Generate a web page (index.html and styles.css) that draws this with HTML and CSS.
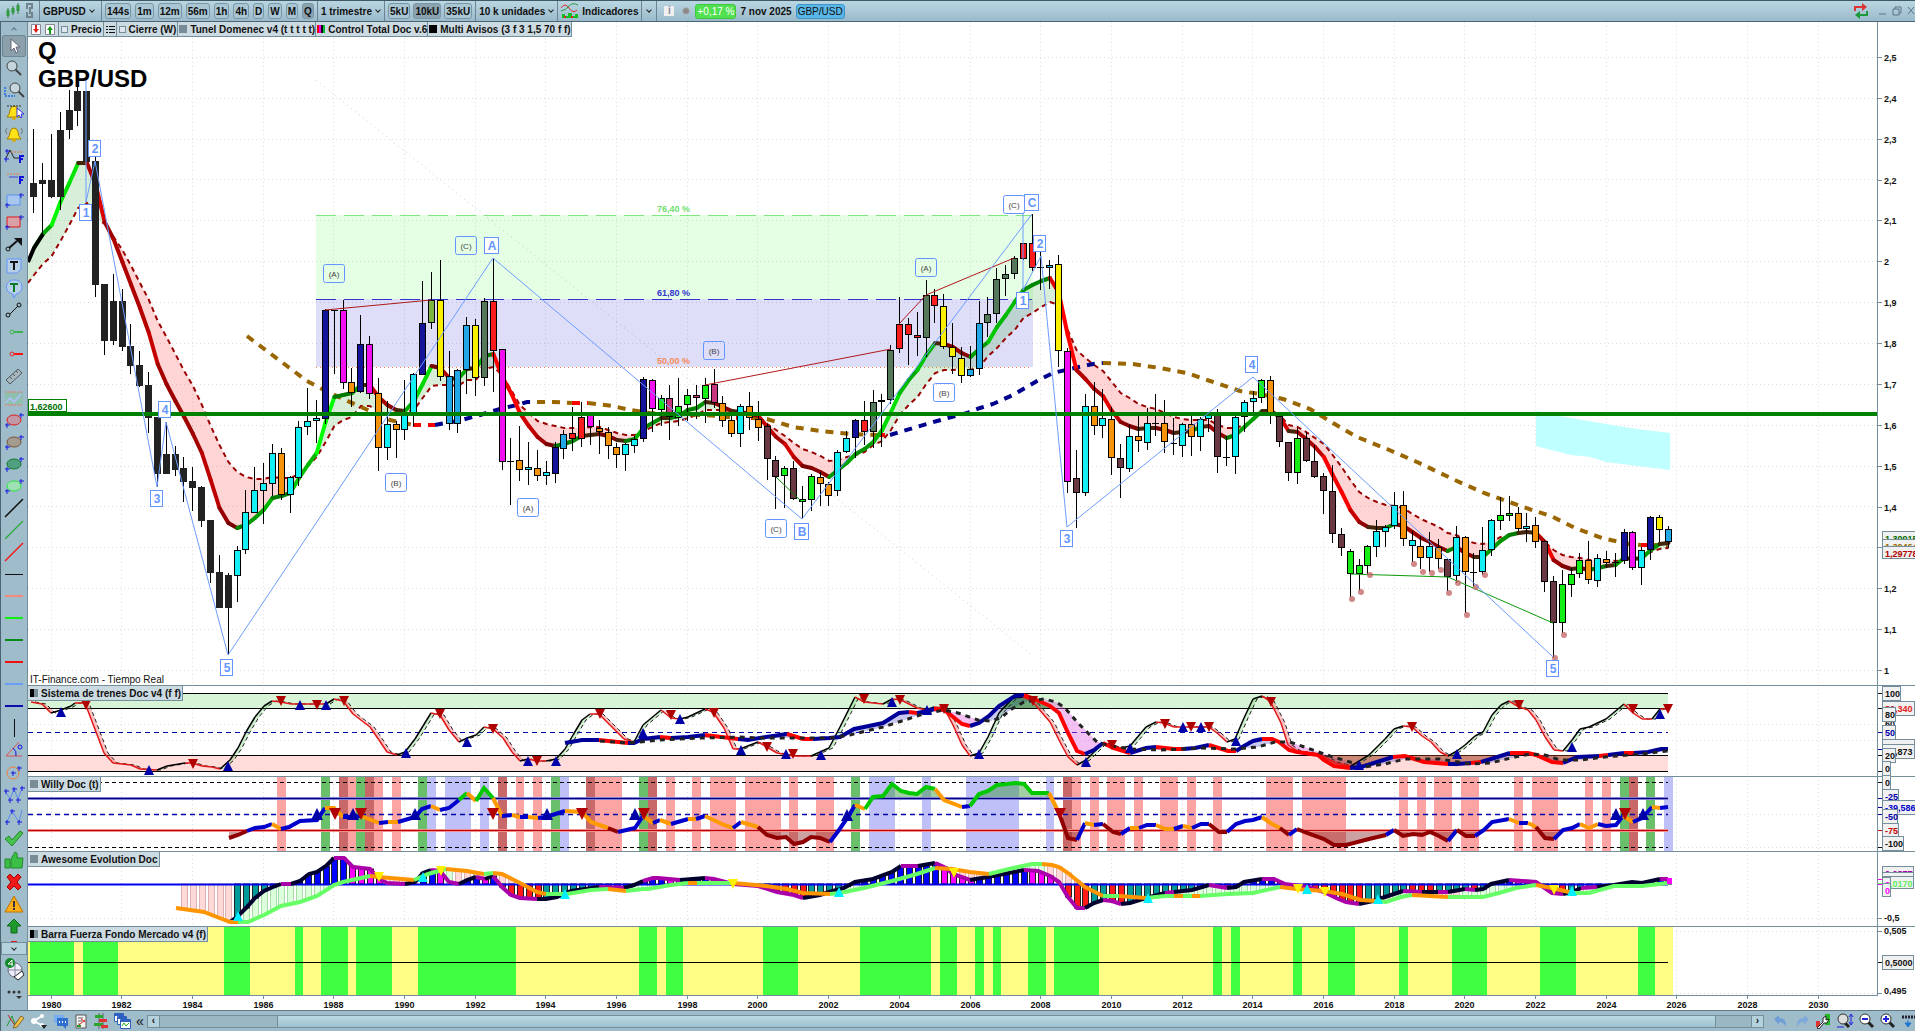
FILE: index.html
```html
<!DOCTYPE html>
<html lang="es">
<head>
  <meta charset="UTF-8" />
  <meta name="viewport" content="width=device-width, initial-scale=1.0" />
  <title>GBP/USD</title>
  <link rel="stylesheet" href="styles.css">
</head>
<body>
  <header class="toolbar">
    <div class="group">
      <svg class="icon" width="18" height="18" viewBox="0 0 18 18"><path d="M4 6v10M9 4v9M14 1v11" stroke="#2c7a3a"/><path d="M4 8v6M9 6v5M14 3v6" stroke="#2f9a40" stroke-width="3"/></svg>
      <svg class="icon" width="8" height="16" viewBox="0 0 8 16" fill="none" stroke="#70828c" stroke-width="2"><path d="M1 6V1h5v5M1 9v5h5V9M4 4v7"/></svg>
    </div>
    <button class="group pick symbol">GBPUSD <i class="chev"></i></button>
    <div class="group frames">
      <button>144s</button><button>1m</button><button>12m</button><button>56m</button><button>1h</button><button>4h</button><button>D</button><button>W</button><button>M</button><button class="on">Q</button>
    </div>
    <button class="group pick">1 trimestre <i class="chev"></i></button>
    <div class="group frames units">
      <button>5kU</button><button class="on">10kU</button><button>35kU</button>
    </div>
    <button class="group pick">10 k unidades <i class="chev"></i></button>
    <button class="group pick indi">
      <svg width="18" height="16" viewBox="0 0 18 16" fill="none"><path d="M0 5q4-6 8 0t8 2" stroke="#d33"/><path d="M0 8q5-1 8-5t9-1" stroke="#2a9a3a"/><path d="M1 15v-4h3v2h3v-3h4v3h3v-2h3v4z" fill="#10c020"/><path d="M4 15v-2M11 15v-2" stroke="#d22" stroke-width="2"/></svg>
      Indicadores
    </button>
    <button class="group pick more" aria-label="Más indicadores"><i class="chev"></i></button>
    <div class="info"><span class="box-i">i</span><span class="dot"></span><span class="change">+0,17 %</span><b>7 nov 2025</b><span class="pair">GBP/USD</span></div>
    <div class="window">
      <svg width="18" height="18" viewBox="0 0 18 18" fill="none" stroke-width="2"><path d="M3 9V5h9" stroke="#d33"/><path d="M10 1l5 4-5 4z" fill="#d33"/><path d="M15 9v4H6" stroke="#1a9a3a"/><path d="M8 9l-5 4 5 4z" fill="#1a9a3a"/></svg>
      <svg width="40" height="14" viewBox="0 0 40 14" fill="none" stroke="#5d7482"><path d="M4 10h7M18 5h6v6h-6zM20 5V3h6v6h-2M33 3l6 7M39 3l-6 7"/></svg>
    </div>
  </header>

  <div class="work">
    <nav class="side">
      <button class="scroll" aria-label="Arriba"><i class="chev up"></i></button>
      <div id="tools" class="tools"></div>
      <button class="scroll down" aria-label="Abajo"><i class="chev"></i></button>
      <button class="tool big" aria-label="Objetos"><svg width="24" height="28" viewBox="0 0 24 28"><circle cx="13" cy="15" r="7" fill="#eef" stroke="#667"/><path d="M13 8v14M6 15h14" stroke="#889"/><path d="M12 22l8-6 2 4-6 5z" fill="#fff" stroke="#222"/><circle cx="8" cy="8" r="5" fill="#138a2a"/><path d="M10 11V5L6 9h5" stroke="#fff" fill="none"/></svg></button>
      <button class="tool" aria-label="Más"><svg width="24" height="22" viewBox="0 0 24 22"><g fill="#333"><circle cx="7" cy="9" r="1.500"/><circle cx="12" cy="9" r="1.500"/><circle cx="17" cy="9" r="1.500"/><path d="M14 13h6l-3 3z"/></g></svg></button>
    </nav>

    <main class="chart">
      <section class="panel price">
        <svg id="price"></svg>
        <div class="tabs">
          <button class="mini"><svg width="24" height="11" viewBox="0 0 24 11"><path d="M.5.500h9v10h-9zM14.500.500h9v10h-9z" fill="#fff" stroke="#889"/><path d="M4 1h2v4h2L5 9 2 5h2z" fill="#d22"/><path d="M18 10h2V6h2l-3-4-3 4h2z" fill="#1a9a1a"/></svg></button>
          <label><input type="checkbox">Precio</label>
          <button class="mini" aria-label="Lista"><svg width="9" height="9" viewBox="0 0 9 9" stroke="#111"><path d="M0 1.500h2M3 1.500h6M0 4.500h2M3 4.500h6M0 7.500h2M3 7.500h6"/></svg></button>
          <label><input type="checkbox">Cierre (W)</label>
          <span><i class="sq"></i>Tunel Domenec v4 (t t t t t)</span>
          <span><i class="sq multi"></i>Control Total Doc v.6</span>
          <span><i class="sq black"></i>Multi Avisos (3 f 3 1,5 70 f f)</span>
        </div>
        <h1>Q<br>GBP/USD</h1>
        <p class="source">IT-Finance.com - Tiempo Real</p>
      </section>
      <section class="panel trenes"><svg id="trenes"></svg><span class="tab"><i class="sq duo"></i>Sistema de trenes Doc v4 (f f)</span></section>
      <section class="panel willy"><svg id="willy"></svg><span class="tab"><i class="sq"></i>Willy Doc (t)</span></section>
      <section class="panel awesome"><svg id="awesome"></svg><span class="tab"><i class="sq"></i>Awesome Evolution Doc</span></section>
      <section class="panel barra"><svg id="barra"></svg><span class="tab"><i class="sq duo"></i>Barra Fuerza Fondo Mercado v4 (f)</span></section>
      <svg id="years" class="years"></svg>
    </main>
  </div>

  <footer class="bottom">
    <button aria-label="Dibujar"><svg width="20" height="16" viewBox="0 0 20 16" fill="none"><path d="M2 13L7 3l3 8 4-5" stroke="#293"/><path d="M3 2l8 12" stroke="#c22"/><path d="M9 13l7-10 3 2-7 9-4 1z" fill="#f5c542" stroke="#863"/></svg></button>
    <button aria-label="Compartir"><svg width="18" height="16" viewBox="0 0 18 16"><path d="M12 3L4 8l9 5" stroke="#fff" stroke-width="2" fill="none"/><circle cx="12" cy="3" r="2" fill="#fff"/><circle cx="4" cy="8" r="3" fill="#fff"/><circle cx="12" cy="12" r="2" fill="#fff"/><path d="M11 12h6l-3 4z" fill="#222"/></svg></button>
    <button aria-label="Chat"><svg width="16" height="16" viewBox="0 0 16 16"><path d="M1 2h10v8H1z" fill="#78aef0"/><path d="M4 5h11v8h-2v3l-3-3H4z" fill="#2f6fd0"/><path d="M6 9h7" stroke="#fff" stroke-width="2" stroke-dasharray="1 2"/></svg></button>
    <button aria-label="Informe"><svg width="14" height="16" viewBox="0 0 14 16"><path d="M2 2h10v13H2z" fill="#f4f4f4" stroke="#555"/><path d="M4 5h5M4 8h4M4 11h2" stroke="#666"/><path d="M7 6l4 3M5 12l6-5" stroke="#d22"/><path d="M3 12h4v2H3z" fill="#292"/></svg></button>
    <button aria-label="Cartera"><svg width="16" height="16" viewBox="0 0 16 16"><path d="M6 0v16M10 0v16" stroke="#666"/><path d="M2 2h8v3H2zM1 10h9v3H1z" fill="#2ba52b"/><path d="M6 6h8v3H6zM8 12h7v3H8z" fill="#d33"/></svg></button>
    <button aria-label="Ventanas"><svg width="17" height="16" viewBox="0 0 17 16" fill="#fff" stroke="#2f62c0"><path d="M.5.500h9v8h-9z"/><path d="M1 2h8" stroke-width="2"/><path d="M3.500 3.500h9v8h-9z"/><path d="M4 5h8" stroke-width="2"/><path d="M6.500 6.500h10v9h-10z"/><path d="M7 8h9" stroke-width="2"/><path d="M8 13l2-3 2 3 3-3" stroke="#2a2" fill="none"/></svg></button>
    <button class="fold">«</button>
    <div class="bar">
      <button aria-label="Anterior">‹</button>
      <div class="track"><div class="thumb"></div></div>
      <button aria-label="Siguiente">›</button>
    </div>
    <button aria-label="Deshacer"><svg width="16" height="16" viewBox="0 0 16 16"><path d="M1 6l5-4v3q8 0 7 9-2-5-7-5v3z" fill="#6f9fd6"/></svg></button>
    <button aria-label="Rehacer"><svg width="16" height="16" viewBox="0 0 16 16"><path d="M15 6l-5-4v3Q2 5 3 14q2-5 7-5v3z" fill="#7fa9da"/></svg></button>
    <button aria-label="Ajustes"><svg width="16" height="16" viewBox="0 0 16 16"><path d="M1 8h4v6H1z" fill="#d33"/><path d="M10 1h5v11h-5z" fill="#2b2"/><path d="M2 15l6-6V5l3-2v4l3-1-2 4H9l-5 6z" fill="#fff" stroke="#222"/></svg></button>
    <button aria-label="Ajustar zoom"><svg width="18" height="16" viewBox="0 0 18 16"><path d="M8 9l5 5" stroke="#222" stroke-width="3"/><circle cx="7" cy="6" r="5" fill="#ddd" stroke="#333"/><path d="M15 2v9M13 4l2-3 2 3M13 9l2 3 2-3M1 14h7" stroke="#22d" fill="none"/></svg></button>
    <button aria-label="Alejar"><svg width="16" height="16" viewBox="0 0 16 16"><path d="M9 9l5 5" stroke="#222" stroke-width="3"/><circle cx="6" cy="6" r="5" fill="#fff" stroke="#333"/><path d="M3 6h6" stroke="#22d" stroke-width="2"/></svg></button>
    <button aria-label="Acercar"><svg width="16" height="16" viewBox="0 0 16 16"><path d="M9 9l5 5" stroke="#222" stroke-width="3"/><circle cx="6" cy="6" r="5" fill="#fff" stroke="#333"/><path d="M3 6h6M6 3v6" stroke="#22d" stroke-width="2"/></svg></button>
    <button aria-label="Panel"><svg width="14" height="16" viewBox="0 0 14 16"><path d="M1 4h13" stroke="#223" stroke-width="3" stroke-dasharray="2 1"/><path d="M7 7v4M4 10l3 4 3-4z" stroke="#27c" fill="#27c"/></svg></button>
  </footer>
  <script src="chart.js"></script>
</body>
</html>
```

FILE: styles.css
```css
* {
  box-sizing: border-box;
}
body {
  margin: 0;
  height: 100vh;
  display: flex;
  flex-direction: column;
  overflow: hidden;
  font-family: "Liberation Sans", Arial, sans-serif;
  font-size: 10px;
  font-weight: bold;
  color: #111;
  background-color: #9fbcca;
}
button {
  font: inherit;
  color: inherit;
  background: none;
  border: 0;
  padding: 0;
  margin: 0;
  cursor: pointer;
}
.toolbar {
  height: 22px;
  flex: none;
  display: flex;
  align-items: stretch;
  border-top: 1px solid #3f5866;
  border-bottom: 1px solid #4a6675;
  background: linear-gradient(#b9d6e2, #9bbaca);
}
.group {
  display: flex;
  align-items: center;
  gap: 4px;
  padding: 0 4px;
  border-right: 1px solid #6b8594;
}
.group:first-child {
  width: 40px;
}
.pick {
  gap: 3px;
  padding: 0 3px;
}
.symbol {
  width: 62px;
}
.frames button {
  height: 16px;
  padding: 0 1px;
  border: 1px solid #7b97a5;
  border-radius: 3px;
  background-color: #a9c6d4;
}
.frames {
  gap: 4px;
  padding: 0 3px;
}
.units {
  gap: 3px;
}
.frames .on {
  background-color: #8ba3b0;
}
.indi {
  gap: 3px;
}
.chev {
  display: inline-block;
  width: 4px;
  height: 4px;
  margin: 0 1px 2px;
  border-right: 1px solid #222;
  border-bottom: 1px solid #222;
  transform: rotate(45deg);
}
.more {
  padding: 0 4px;
}
.chev.up {
  margin: 2px 0 0;
  transform: rotate(225deg);
  border-color: #5d7482;
}
.info {
  display: flex;
  align-items: center;
  gap: 4px;
  padding-left: 7px;
}
.box-i {
  width: 10px;
  height: 10px;
  line-height: 10px;
  text-align: center;
  background: #f0f0f0;
  color: #889;
  margin-right: 4px;
}
.dot {
  width: 8px;
  height: 8px;
  border-radius: 50%;
  background: #8a8a8a;
  border: 1px solid #b0b8bc;
  margin-right: 1px;
}
.change,
.pair {
  font-weight: normal;
  line-height: 13px;
  padding: 0 1px;
  border-radius: 3px;
}
.change {
  color: #fff;
  background: #50e050;
  border: 1px solid #3fc83f;
}
.pair {
  background: #5ab6e6;
  border: 1px solid #3f94cc;
}
.window {
  margin-left: auto;
  display: flex;
  align-items: center;
  gap: 5px;
}
.work {
  flex: 1;
  min-height: 0;
  display: flex;
}
.side {
  width: 28px;
  flex: none;
  display: flex;
  flex-direction: column;
  border-left: 1px solid #4a6272;
  border-right: 1px solid #748e9b;
}
.scroll {
  height: 13px;
  flex: none;
  display: flex;
  align-items: center;
  justify-content: center;
}
.scroll.down {
  background: #b4d2de;
  border: 1px solid #748e9b;
}
.tools {
  flex: 1;
  min-height: 0;
  overflow: hidden;
}
.tool {
  display: block;
  width: 24px;
  height: 22px;
  margin: 0 1px;
  flex: none;
}
.tool.big {
  height: 28px;
}
.tool.on {
  background: #8ba0ab;
  border-radius: 3px;
  box-shadow: inset 0 0 0 1px #6f8794;
}
.tool:last-child {
  margin-bottom: 5px;
}
.chart {
  flex: 1;
  min-width: 0;
  display: flex;
  flex-direction: column;
  background: #fff;
}
.panel {
  position: relative;
  min-height: 0;
  overflow: hidden;
}
.price { flex: 663 1 0; }
.trenes { flex: 91 1 0; }
.willy { flex: 75 1 0; }
.awesome { flex: 75 1 0; }
.barra { flex: 69 1 0; }
.panel > svg,
.years {
  display: block;
  width: 100%;
  height: 100%;
}
.years {
  height: 15px;
  flex: none;
}
.tab,
.tabs {
  position: absolute;
  left: 0;
  top: 0;
  display: flex;
  align-items: center;
  height: 15px;
}
.tab,
.tabs > * {
  height: 15px;
  display: flex;
  align-items: center;
  gap: 2px;
  padding: 0 1px 0 2px;
  background: #ccdae1;
  border-right: 1px solid #748e9b;
  border-bottom: 1px solid #748e9b;
  white-space: nowrap;
}
.tab {
  top: 1px;
}
.tabs > span {
  padding: 0 0 0 1px;
}
.tabs input {
  appearance: none;
  width: 7px;
  height: 7px;
  margin: 0 1px 0 0;
  border: 1px solid #748e9b;
  background: #dde7ec;
}
.mini:first-child {
  padding: 0 3px;
}
.sq {
  width: 8px;
  height: 8px;
  margin-right: 1px;
  background: #788c97;
}
.sq.black { background: #000; }
.sq.duo { background: linear-gradient(90deg, #000 50%, #788c97 50%); }
.sq.multi { background: linear-gradient(90deg, #e00 25%, #e0e 25%, #e0e 50%, #111 50%, #111 75%, #0b3 75%); }
h1 {
  position: absolute;
  left: 10px;
  top: 15px;
  margin: 0;
  font-size: 24px;
  line-height: 28px;
  color: #000;
}
.source {
  position: absolute;
  left: 2px;
  bottom: 0;
  margin: 0;
  font-weight: normal;
  line-height: 10px;
}
text {
  font-family: "Liberation Sans", Arial, sans-serif;
  font-size: 9px;
  font-weight: bold;
}
.wave text {
  font-size: 12px;
  fill: #6495ff;
  text-anchor: middle;
}
.wave .sub {
  font-size: 8px;
  font-weight: normal;
  fill: #444;
}
.bottom {
  height: 21px;
  flex: none;
  display: flex;
  align-items: center;
  gap: 5px;
  padding: 0 0 0 4px;
  border-top: 1px solid #5f7a88;
  border-left: 1px solid #4a6272;
}
.bottom svg {
  display: block;
}
.bottom .fold {
  font-size: 14px;
  font-weight: normal;
  line-height: 14px;
}
.bar {
  flex: 1;
  display: flex;
  height: 13px;
  margin: 0 4px 0 -2px;
  border: 1px solid #748e9b;
}
.bar button {
  width: 11px;
  line-height: 10px;
  background: #b4d2de;
}
.track {
  flex: 1;
  display: flex;
  padding: 0 35px 0 117px;
  border: solid #748e9b;
  border-width: 0 1px;
  background: #9cb7c4;
}
.thumb {
  flex: 1;
  border: solid #748e9b;
  border-width: 0 1px;
  background: linear-gradient(#bad9e4, #9ec0cf);
}
```

FILE: chart.js
```js
// chart space: x 28..1915, one bar every STEP, bar 0 = Q3 1979
const X0 = 34, STEP = 8.835, LAST = 1668;
const bx = i => X0 + i * STEP;
const r1 = n => Math.round(n * 10) / 10;

const line = (x1, y1, x2, y2, c, w = 1, more = "") =>
  `<line x1="${r1(x1)}" y1="${r1(y1)}" x2="${r1(x2)}" y2="${r1(y2)}" stroke="${c}" stroke-width="${w}" ${more}/>`;
const rect = (x, y, w, h, c, more = "") =>
  `<rect x="${r1(x)}" y="${r1(y)}" width="${r1(w)}" height="${r1(h)}" fill="${c}" ${more}/>`;
const poly = (pts, c, w, more = "") =>
  `<polyline points="${pts}" fill="none" stroke="${c}" stroke-width="${w}" ${more}/>`;
const area = (pts, c, more = "") => `<polygon points="${pts}" fill="${c}" ${more}/>`;
const text = (x, y, s, c = "#111", more = "") => `<text x="${x}" y="${y}" fill="${c}" ${more}>${s}</text>`;
const crisp = 'shape-rendering="crispEdges"';

function draw(id, top, height, body) {
  const el = document.getElementById(id);
  el.setAttribute("viewBox", `28 ${top} 1887 ${height}`);
  el.setAttribute("preserveAspectRatio", "none");
  el.innerHTML = body;
}

function grid(top, bottom, ys) {
  let s = "";
  for (let i = 2; i < 205; i += 8) s += line(Math.round(bx(i)) - .5, top, Math.round(bx(i)) - .5, bottom, "#dedede", 1, 'stroke-dasharray="1 3"');
  ys.forEach(y => s += line(28, y, 1877, y, "#dedede", 1, 'stroke-dasharray="1 3"'));
  return s;
}

function frame(top, bottom) {
  return line(1877.5, top, 1877.5, bottom, "#748e9b", 1) + line(28, top + .5, 1915, top + .5, "#748e9b", 1);
}

// boxed value on the right scale
function tag(y, s, c, w, h = 14) {
  return rect(1882.5, y + .5, w, h, "#f1f1f1", 'stroke="#748e9b"') + text(1885, y + 11, s, c);
}
const tick = (y, c = "#111") => line(1878, y, 1882, y, c);

function tri(list, up, c, r) {
  return list.trim().split(" ").map(p => {
    const [x, y] = p.split(",").map(Number);
    return up ? area(`${x - r},${y + r} ${x + r},${y + r} ${x},${y - r}`, c)
              : area(`${x - r},${y - r} ${x + r},${y - r} ${x},${y + r}`, c);
  }).join("");
}

// "x,y x,y B x,y ..." : a letter sets the colour of the segments that follow
function parse(src) {
  let col = "", out = [];
  src.trim().split(/\s+/).forEach(t => {
    if (/^[A-Z]$/.test(t)) col = t;
    else { const [x, y] = t.split(",").map(Number); out.push({ x, y, col }); }
  });
  return out;
}
function segments(pts, colors, w, more = "") {
  let s = "", i = 1;
  while (i < pts.length) {
    const c = pts[i].col;
    let run = `${pts[i - 1].x},${pts[i - 1].y}`;
    while (i < pts.length && pts[i].col === c) { run += ` ${pts[i].x},${pts[i].y}`; i++; }
    s += poly(run, colors[c], w, more);
  }
  return s;
}
function at(pts, x) {
  for (let i = 1; i < pts.length; i++) {
    if (x <= pts[i].x) {
      const a = pts[i - 1], b = pts[i];
      return a.y + (b.y - a.y) * (x - a.x) / (b.x - a.x);
    }
  }
  return pts[pts.length - 1].y;
}

/* ---------- price ---------- */
const C = { k: "#222", c: "#14f0f5", o: "#f7930a", n: "#14149a", m: "#f210f2", g: "#14ee14", y: "#fbf000",
  s: "#22a8e6", r: "#f81c1c", d: "#55775a", b: "#6a3842", p: "#c8367e", l: "#7cb342" };
// high low top bottom colour
const candles = `129 213 183 197 k;163 238 180 184 k;134 198 180 197 k;112 210 130 197 k;90 139 110 130 k;80 126 91 111 k;91 162 91 162 k;157 297 161 285 k;284 355 284 341 k;274 345 301 341 k
289 351 301 347 k;324 374 346 366 k;351 387 365 386 k;372 433 385 418 k;417 487 417 474 k;422 474 454 474 k;446 476 454 470 k;457 502 468 482 k;467 511 481 488 k;486 527 487 521 k
520 583 520 573 k;555 608 572 608 k;573 655 575 608 k;546 602 550 576 c;490 554 512 550 c;467 513 490 513 c;463 524 483 491 c;444 496 453 484 c;448 500 453 495 o;476 513 477 495 c
421 486 427 478 c;388 435 421 427 c;400 443 418 421 c;309 424 310 419 n;310 374 310 311 k;300 389 310 383 m;368 407 382 393 o;315 393 344 392 n;336 399 344 394 m;378 471 393 448 o
401 460 424 448 c;421 458 424 430 o;380 440 412 430 c;373 426 374 413 c;281 375 323 375 n;272 329 300 323 l;260 381 300 377 y;351 430 376 424 s;369 433 370 424 s;317 394 325 370 s
319 396 325 378 y;298 386 301 378 d;258 392 301 351 r;349 470 349 462 m;438 505 461 462 k;426 481 460 470 o;442 485 467 470 c;450 481 468 476 o;461 485 472 476 c;442 483 447 474 n
430 459 434 449 s;407 451 433 439 r;402 447 417 439 r;415 445 415 427 m;420 454 428 432 o;427 459 432 446 o;443 468 447 455 o;443 471 444 455 c;436 453 439 446 c;377 442 379 439 n
379 432 380 409 m;395 426 398 410 g;385 440 398 417 p;378 426 406 418 g;389 421 395 405 g;385 419 395 398 p;378 423 385 399 g;369 408 384 403 p;396 427 403 421 o;413 437 420 434 o
404 447 406 434 c;392 430 406 418 o;401 441 419 428 o;424 480 426 459 b;456 509 460 477 b;466 508 468 476 g;461 500 468 499 b;486 519 499 502 g;474 511 476 500 g;472 506 477 484 o
482 506 484 496 o;450 496 452 491 c;431 453 438 452 c;419 458 420 438 n;401 445 420 432 r;390 448 402 432 d;394 447 400 402 d;345 404 350 400 d;297 353 324 349 r;318 365 324 335 r
312 356 335 338 r;280 357 295 338 d;289 323 295 306 r;294 349 306 347 y;323 374 347 357 y;347 383 358 376 y;346 377 369 376 s;301 375 323 369 s;297 337 314 323 d;268 323 279 314 d
265 296 274 279 d;256 279 258 274 d;243 260 243 259 r;214 271 243 268 r;252 290 267 268 k;260 289 265 268 s;255 367 264 351 y;348 493 351 482 m;450 528 478 493 b;394 496 406 493 c
382 435 406 426 o;389 438 418 426 c;407 475 419 458 o;444 498 458 468 b;425 472 436 469 c;416 452 436 441 o;408 450 423 443 c;394 436 423 424 k;400 453 423 442 o;418 455 443 444 k
423 457 424 446 c;416 456 424 437 o;417 451 419 437 c;412 432 414 419 c;409 473 415 457 b;436 466 457 458 k;416 474 417 457 c;400 432 402 417 c;391 414 398 402 c;379 403 380 398 g
376 424 380 416 o;416 447 416 442 b;442 481 442 473 b;428 484 438 473 g;432 462 438 461 b;445 478 461 477 b;473 514 476 491 b;465 543 491 534 b;528 556 534 548 b;549 597 551 574 g
559 591 565 574 g;545 575 546 566 g;520 557 531 547 c;525 547 527 532 c;492 529 505 526 c;491 546 505 539 o;531 562 540 546 c;537 569 546 558 o;532 572 546 558 c;539 569 547 559 o
559 591 559 577 b;526 583 537 576 c;536 613 537 572 o;553 587 572 573 k;527 575 550 572 c;519 556 520 550 c;497 530 515 521 g;496 521 513 516 g;507 531 513 529 o;513 542 526 529 c
517 548 525 542 o;540 592 541 582 b;576 658 581 623 b;570 633 584 623 g;568 597 574 585 g;553 578 560 574 g;541 584 560 580 o;554 587 558 581 c;551 568 559 563 o;553 577 562 563 k
529 564 532 561 n;531 570 532 568 m;547 585 550 568 c;516 560 517 550 n;515 542 517 530 y;526 548 529 542 s`.split(/[;\n]/).map(r => r.split(" "));

// fast average and its companion, one value per bar
const fast = [248,234,225,202,183,163,163,185,222,239,262,285,308,333,364,384,401,417,434,453,480,508,523,528,525,518,510,498,496,493,
478,465,453,422,397,395,393,385,385,397,405,410,411,401,384,366,368,378,379,369,368,356,354,377,393,413,426,437,444,446,
444,441,436,435,434,436,440,441,439,428,423,418,418,416,410,408,402,403,407,411,412,414,416,427,437,444,457,466,468,472,
477,470,463,454,449,442,430,412,393,380,370,355,343,344,347,353,357,349,342,327,315,302,290,285,281,278,293,335,370,379,
389,396,411,422,426,429,428,428,430,433,432,431,427,426,433,438,435,427,419,411,411,417,431,432,439,447,457,475,492,510,
522,527,528,528,524,526,532,538,542,547,551,547,553,557,557,549,541,535,533,532,533,542,560,566,569,568,570,568,566,565,
558,559,558,550,544,543];
const slow = [275,264,256,241,225,208,203,218,224,237,250,266,283,300,321,337,354,371,386,405,426,445,462,472,477,479,479,477,478,478,
474,466,457,442,426,420,417,406,406,411,415,413,412,410,398,386,385,385,386,380,380,369,367,375,390,405,413,421,424,426,
428,428,428,427,427,430,433,435,435,431,427,423,422,421,418,415,410,410,410,411,412,413,416,424,430,436,443,449,452,456,
461,460,457,455,452,445,441,430,415,405,397,384,373,370,370,369,370,367,356,348,338,330,318,313,307,302,305,330,350,358,
365,371,382,393,398,404,407,409,413,417,419,420,420,420,425,428,428,425,420,411,411,415,425,427,432,438,444,455,467,480,
492,498,502,505,506,508,514,519,523,527,533,535,540,543,544,542,537,535,533,532,533,542,550,555,557,558,560,560,560,561,
560,559,556,552,549,548];

// slope decides the shade: green going up, red going down, dark when flat
function shade(d, i) {
  const k = i < 30 ? 3 : 8;
  if (d < -1) return `rgb(0,${Math.min(255, 110 + Math.abs(d) * 6)},0)`;
  if (d > 1) return `rgb(${Math.min(255, 105 + d * k)},0,0)`;
  return "#46260a";
}

const slowMa = parse(`N 247,336 267,351 287,366 307,381 326,391 343,399 370,411 390,420 413,425 R 435,425 B 440,424 458,421 480,415 500,409 517,405 527,402 537,402
N 553,402 572,403 R 588,403 N 613,406 630,410 650,413 680,414 720,416 736,418 R 752,418 N 767,419 793,427 820,431 850,434 877,435 R 890,435
B 913,428 937,421 967,413 980,408 993,404 1013,395 1037,381 1053,373 1070,369 1093,364 1103,363
N 1133,364 1160,368 1187,373 1210,381 1240,391 1260,394 1283,399 1310,409 1333,423 1357,437 1387,449 1417,462 1440,473 1457,481 1484,493 1512,503 1535,511 1551,516 1575,528 1602,538 1629,544 1641,545 R 1651,545 N 1668,545`);

function price() {
  const ys = [];
  for (let p = 1; p <= 2.51; p += .1) ys.push(Math.round(670 - (p - 1) * 408.75) + .5);
  let s = grid(22, 685, ys);
  s += line(316, 80, 1033, 656, "#ccc", 1, 'stroke-dasharray="1 4"');

  s += rect(316, 215, 717, 84, "rgba(0,255,0,.1)") + rect(316, 299, 717, 68, "rgba(50,50,210,.16)");
  s += line(316, 215.5, 1032, 215.5, "#7fe87f", 1, 'stroke-dasharray="20 8"');
  s += line(316, 299.5, 1032, 299.5, "#3333d0", 1, 'stroke-dasharray="20 8"');
  s += line(316, 367.5, 1032, 367.5, "#f58040", 1, 'stroke-dasharray="1 3"');
  s += text(657, 212, "76,40 %", "#6fe06f") + text(657, 296, "61,80 %", "#3333d0") + text(657, 364, "50,00 %", "#f58a58");

  s += area("1536,411 1559,416 1606,424 1637,429 1670,433 1670,470 1637,466 1606,462 1590,457 1571,455 1551,450 1536,446", "#bfffff");

  // tunnel
  for (let i = 0; i < fast.length - 1; i++) {
    const up = fast[i] + fast[i + 1] < slow[i] + slow[i + 1];
    s += area(`${bx(i)},${fast[i]} ${bx(i + 1)},${fast[i + 1]} ${bx(i + 1)},${slow[i + 1]} ${bx(i)},${slow[i]}`, up ? "rgba(60,170,60,.2)" : "rgba(255,60,60,.22)", crisp);
  }
  s += area(`28,262 34,248 34,275 28,283`, "rgba(60,170,60,.2)");
  s += poly("28,283 " + slow.map((y, i) => r1(bx(i)) + "," + y).join(" "), "#990000", 2, 'stroke-dasharray="5 4"');
  s += segments(slowMa, { N: "#996600", R: "#f00", B: "#00008c" }, 4, 'stroke-dasharray="8 7"');
  for (let i = 0; i < fast.length - 1; i++)
    s += line(bx(i), fast[i], bx(i + 1), fast[i + 1], shade(fast[i + 1] - fast[i], i), 4, 'stroke-linecap="round"');
  s += poly("28,262 34,248 43,234", "#000", 4);

  // candles
  candles.forEach(([hi, lo, top, bot, c], i) => {
    const x = Math.round(bx(i) - .7), h = bot - top;
    s += rect(x, +hi, 1, lo - hi, "#000", crisp);
    if (h < 2) s += rect(x - 3, +top, 7, 1, "#000", crisp);
    else if (c === "k") s += rect(x - 3, +top, 7, h, C.k, crisp);
    else s += rect(x - 2.5, +top + .5, 6, h - 1, C[c], 'stroke="#000"');
  });

  s += poly("325,310 431,300", "#b01818", 1) + poly("705,385 891,349", "#b01818", 1) + poly("899,324 926,295 1014,258", "#b01818", 1);
  s += poly("776,477 802,502", "#0a8a0a", 1) + poly("1351,574 1448,577 1553,623", "#0a9a0a", 1);
  "1352,599 1361,592 1370,575 1414,564 1423,572 1432,573 1441,570 1449,593 1458,583 1467,615 1476,587 1485,575 1564,635 1555,658".split(" ").forEach(p => {
    const [x, y] = p.split(",");
    s += `<circle cx="${x}" cy="${y}" r="3" fill="#c46a6a" fill-opacity=".8"/>`;
  });

  s += line(28, 414, 1877, 414, "#008000", 4);
  s += rect(28.5, 399.5, 38, 12, "#fff", 'stroke="#008000"') + text(30, 410, "1,62600", "#007000");

  // waves
  s += poly("86,80 86,202 95,161 157,487 166,422 228,655 493,258 802,519 1032,214", "#6c9cff", 1);
  s += poly("1023,213 1023,290 1041,256 1067,527 1253,377 1553,657", "#6c9cff", 1);
  s += '<g class="wave">';
  [["1",86,212],["2",95,148],["3",157,498],["4",165,409],["5",227,667],["A",492,245],["B",802,531],["C",1032,202],["2",1040,243],["1",1023,300],["3",1067,538],["4",1252,364],["5",1553,668]].forEach(([t, x, y]) => {
    const w = t > "9" ? 14 : 12;
    s += rect(x - w / 2 - .5, y - 8 + .5, w, 16, "#fff", 'stroke="#6495ff"') + text(x, y + 5, t, "#6495ff");
  });
  [["A",334,274],["B",396,483],["C",466,246],["A",528,508],["B",714,351],["A",926,268],["B",944,393],["C",776,529],["C",1014,205]].forEach(([t, x, y]) => {
    s += rect(x - 10.5, y - 9.5, 21, 18, "none", 'rx="2" stroke="#6495ff"') + text(x, y + 3, `(${t})`, "#444", 'class="sub"');
  });
  s += "</g>";

  // scale
  s += line(1877.5, 22, 1877.5, 685, "#748e9b");
  for (let k = 0; k < 16; k++) {
    const y = Math.round(670 - k * 40.875) + .5, v = (1 + k / 10);
    s += line(1878, y, 1882, y, "#748e9b");
    if (k !== 3) s += text(1884, y + 3, k % 10 ? v.toFixed(1).replace(".", ",") : v);
  }
  s += tag(531, "1,30915", "#006a00", 34, 12) + tag(539, "1,30464", "#996600", 34, 12) + tag(546, "1,29778", "#b00000", 34, 12);
  draw("price", 22, 663, s);
}

/* ---------- sistema de trenes ---------- */
const osc = parse(`31,702 42,704 51,713 61,710 71,706 75,703 85,703 104,753 113,763 131,765 140,769 157,770 167,766 185,763 192,763 202,766 212,767 220,769 230,760 238,748 246,732 255,717 264,706 272,701 281,702 291,704 326,704 334,699 343,701 353,714 370,727 379,740 387,752 397,755 405,752 415,739 431,713 440,715 449,730 459,742 467,738 476,735 484,727 493,729 503,738 512,752 520,761 528,759 537,761 546,761 556,759 565,749 573,735 582,720 590,714 599,714 610,725 624,739 634,742 643,725
661,710 671,718 680,719 688,717 705,709 713,712 724,728 733,749 740,749 758,742 767,747 777,753 794,756 811,756 820,752 829,748 840,727 855,697 864,702 883,704 892,699 901,700 917,708 926,710 934,707 944,708 953,725 962,745 970,756 979,753 988,737 999,713 1013,698 1023,697 1032,701 1050,722 1060,742 1068,757 1077,765 1086,760 1094,752 1103,743 1112,746 1121,748 1130,746 1146,727 1156,722 1164,723 1174,727 1209,727 1217,733 1227,742 1235,739 1244,718 1253,699 1262,696 1270,701
1281,723 1288,745 1297,751 1316,754 1324,757 1336,763 1351,766 1369,755 1385,739 1394,729 1403,726 1412,727 1422,736 1431,742 1440,752 1448,756 1457,751 1465,745 1475,736 1483,732 1492,715 1501,705 1509,701 1519,707 1528,710 1536,720 1545,737 1554,750 1563,751 1572,740 1580,729 1589,727 1606,719 1624,704 1633,713 1642,719 1652,719 1660,709 1668,709`);
const train = parse(`565,743 B 582,740 599,740 R 628,743 B 634,743 643,739 660,737 R 671,738 B 688,737 705,735 R 738,739 B 748,740 766,737 787,734 R 803,739 813,739 B 829,738 840,737 854,729 864,727 883,723 899,713 909,712 R 917,713 B 928,711 934,709 R 944,710 952,716 962,724 970,726 B 979,723 989,716 999,706 1015,696 1024,695 R 1032,698 1050,706 1059,713 1068,733 1077,751 1085,754 B 1094,750 1103,743 R 1113,748 1130,753 B 1146,748 1156,747 R 1174,749 1183,749 B 1195,748 1209,745 R 1228,751 1236,751 B 1244,746 1253,741 1262,739 R 1272,739
1279,742 1289,750 1297,752 1318,755 1324,760 1334,766 1350,768 B 1361,767 1377,762 1393,757 R 1405,756 1424,762 1448,764 B 1457,764 1471,763 R 1481,762 B 1491,759 1510,753 R 1528,753 1536,755 1552,762 1563,763 B 1577,757 1599,756 R 1608,755 B 1624,753 R 1634,753 B 1648,752 1661,749 1668,749`);
const trainAvg = parse(`600,741 628,743 660,740 700,738 740,737 760,738 800,738 829,738 850,735 866,731 883,727 905,720 920,715 944,710 958,713 978,720 990,721 1001,718 1010,710 1024,702 1044,699 1056,702 1065,708 1078,723 1088,733 1097,742 1107,745 1130,749 1160,750 1200,748 1235,749 1258,747 1275,742 1290,742 1310,749 1330,756 1350,762 1365,767 1385,764 1405,759 1440,759 1470,764 1490,763 1515,757 1530,754 1545,755 1560,760 1580,760 1605,757 1640,754 1668,751`);

function between(a, b, from, to, up, down) {
  let s = "";
  for (let x = from; x < to; x += 4) {
    const p = at(a, x), q = at(a, x + 4), u = at(b, x), v = at(b, x + 4);
    s += area(`${x},${p} ${x + 4},${q} ${x + 4},${v} ${x},${u}`, p + q < u + v ? up : down, crisp);
  }
  return s;
}

function trenes() {
  let s = grid(685, 776, [724.5, 740.5]);
  s += rect(28, 693, 1640, 16, "#d8f4d6") + rect(28, 755, 1640, 16, "#ffdcd9");
  [693.5, 708.5, 755.5, 771.5].forEach(y => s += line(28, y, LAST, y, "#000"));
  s += line(28, 732.5, LAST, 732.5, "#0000a8", 1, 'stroke-dasharray="5 4"');
  s += between(train, trainAvg, 600, 1664, "rgba(60,60,200,.28)", "rgba(220,90,220,.38)");
  s += area("1001,708 1015,697 1030,698 1050,706 1052,708", "rgba(0,90,20,.5)");
  s += area("1318,755 1334,766 1350,768 1365,765 1393,757 1404,756", "rgba(150,50,20,.5)");
  s += area("1400,755 1424,762 1450,764 1480,763 1504,755", "rgba(150,50,20,.5)");
  s += area("1536,755 1552,762 1563,763 1582,755", "rgba(150,50,20,.5)");
  const lag = osc.map(p => ({ x: p.x + 4, y: p.y }));
  s += between(osc, lag, 36, 1664, "rgba(80,200,80,.28)", "rgba(240,80,80,.35)");
  s += poly(lag.slice(0, -1).map(p => p.x + "," + p.y).join(" "), "#222", 1, 'stroke-dasharray="4 3"');
  for (let i = 1; i < osc.length; i++)
    s += line(osc[i - 1].x, osc[i - 1].y, osc[i].x, osc[i].y, osc[i].y >= osc[i - 1].y ? "#e01818" : "#000", 1.5);
  s += segments(train, { B: "#000099", R: "#ff0000" }, 4);
  s += poly(trainAvg.map(p => p.x + "," + p.y).join(" "), "#222", 3, 'stroke-dasharray="5 5"');
  s += tri("86,705 193,764 281,701 317,705 344,701 440,714 493,729 537,761 600,714 671,715 714,713 767,747 793,754 864,699 900,700 944,709 1033,701 1112,745 1165,724 1191,727 1209,727 1271,702 1412,727 1519,705 1633,709 1668,709", false, "#b00000", 5);
  s += tri("61,712 149,770 228,766 300,705 326,705 406,753 467,742 528,761 556,761 643,733 680,719 741,750 786,754 821,755 892,702 927,710 979,754 1086,762 1130,748 1183,727 1201,727 1236,741 1359,765 1457,754 1572,747 1660,714", true, "#0000a8", 5);
  s += frame(685, 776);
  [693.5, 708.5, 755.5, 771.5].forEach(y => s += tick(y));
  s += tick(732.5, "#0000a8") + tick(749.5, "#0000a8");
  s += tag(701, "80,340", "#e02020", 32) + text(1885, 727, "60") + tag(686, "100", "#111", 18) + tag(707, "80", "#111", 13);
  s += tag(739, "28,776", "#0000a8", 32) + tag(744, "25,873", "#111", 32) + tag(725, "50", "#0000a8", 13) + tag(748, "20", "#111", 13) + tag(761, "0", "#111", 8);
  draw("trenes", 685, 91, s);
}

/* ---------- willy ---------- */
const bands = {
  "#fca4a4": "28 36 39 41 55 57 64-66 72 75 77-79 81-84 86 89-90 118 120 122-123 125 128-129 131 134 140-142 144-148 155 157 159-160 162-163 168 170-172 176 178",
  "#6abf6a": "33 37 44 59 69 93 180 183",
  "#c86868": "35 38 53 63 70 117 181",
  "#c0c0f8": "45 47-49 51 60 95-97 101 106-111 115 185"
};
function stripes(list, c, top, h) {
  return list.split(" ").map(t => {
    const [a, b = a] = t.split("-").map(Number);
    const x = Math.max(28, Math.round(bx(a) - STEP / 2));
    return rect(x, top, Math.round(bx(b) + STEP / 2) - x, h, c);
  }).join("");
}
const will = parse(`229,838 D 238,835 247,831 B 255,828 264,827 272,824 O 281,829 B 289,827 300,821 317,820 325,808 O 334,808 343,817 B 353,817 361,816 O 379,823 B 388,822 O 398,822 B 415,817 422,809 431,806 O 440,810 B 449,808 459,800 G 467,793 O 476,801 G 484,788 493,798 O 502,816 B 512,815 O 520,817 B 528,817 O 538,818 B 546,817 565,811 O 582,812 591,822 608,828 D 618,832 B 635,828 643,816 O 653,823
B 660,820 O 671,824 B 688,819 O 696,819 B 705,816 O 724,825 733,828 B 741,822 O 758,827 D 767,835 777,838 786,837 794,844 803,842 811,837 820,838 830,842 B 839,830 848,817 855,805 O 865,809 G 873,797 883,796 892,784 901,791 909,793 917,794 926,787 935,789 O 944,800 962,807 B 970,806 G 979,794 988,791 997,785 1007,784 1015,783 1024,784 1032,793 1049,793 O 1059,813 D 1068,838 1077,840 B 1085,823 O 1094,825 B 1103,824 D 1113,832 1121,834 B 1130,828 O 1139,828 B 1147,825 1156,825 O 1165,829 1174,829 B 1183,826 O 1192,828 B 1201,824 1209,824 D 1219,832 1227,832 B 1236,824 1245,821 1253,820 1262,817 O 1272,824 1280,828
D 1289,835 B 1297,829 D 1307,833 1324,839 1334,845 1346,845 1369,839 1386,835 B 1394,830 D 1403,836 1413,834 1422,835 1430,832 1439,836 1448,841 B 1457,830 D 1466,836 1475,836 B 1484,830 1492,822 1509,819 O 1519,823 B 1528,823 O 1536,827 D 1545,838 1554,839 B 1563,830 1572,828 1580,824 O 1589,828 1598,824 B 1606,826 1616,825 1623,816 O 1633,822 B 1642,818 1652,807 O 1660,808 B 1668,807`);

function willy() {
  let s = grid(776, 851, [814.5, 847.5]);
  for (const c in bands) s += stripes(bands[c], c, 776, 75);
  // overshoot beyond -25 and -75
  for (let x = 229; x < 1664; x += 3) {
    const y = at(will, x);
    if (y > 831) s += rect(x, 831, 3, y - 831, "rgba(130,30,30,.42)", crisp);
    if (y < 798) s += rect(x, y, 3, 798 - y, "rgba(50,150,50,.45)", crisp);
  }
  s += line(28, 782.5, LAST, 782.5, "#000", 1, 'stroke-dasharray="4 3"') + line(28, 847.5, LAST, 847.5, "#000", 1, 'stroke-dasharray="4 3"');
  s += line(28, 798.5, LAST, 798.5, "#8080d8", 3) + line(28, 798.5, LAST, 798.5, "#00007a", 1);
  s += line(28, 814.5, LAST, 814.5, "#0000a8", 1.5, 'stroke-dasharray="5 4"');
  s += line(28, 830.5, LAST, 830.5, "#f09090", 3) + line(28, 830.5, LAST, 830.5, "#c00000", 1);
  s += segments(will, { D: "#900000", B: "#0000cc", O: "#ff9a00", G: "#00c800" }, 4);
  s += tri("317,814 353,814 415,814 547,814 635,814 847,815 1616,814 1643,814", true, "#0000a8", 6);
  s += tri("335,814 361,814 493,814 582,814 644,814 1060,814 1625,814", false, "#b00000", 6);
  s += frame(776, 851);
  [[782.5, "#111"], [798.5, "#0000a8"], [807.5, "#0000a8"], [814.5, "#0000a8"], [830.5, "#c00"], [847.5, "#111"]].forEach(([y, c]) => s += tick(y, c));
  s += tag(775, "0", "#111", 8) + tag(789, "-25", "#0000a8", 16) + tag(800, "-39,586", "#0000c8", 36) + tag(809, "-50", "#0000a8", 15) + tag(823, "-75", "#c00000", 16) + tag(836, "-100", "#111", 21);
  draw("willy", 776, 75, s);
}

/* ---------- awesome ---------- */
const ao = parse(`230,922 N 238,916 246,908 255,898 264,891 273,887 281,884 P 291,884 N 300,881 309,874 317,872 326,866 334,858 P 344,858 353,867 370,869 379,879 387,883 405,884 N 415,882 423,873 431,870 P 440,871 449,882 459,884 N 467,880 476,877 P 485,879 N 493,876 P 502,887 511,895 520,898 537,899 N 546,899 557,897 571,891 599,887 P 624,888 N 634,885 643,881 P 653,878 658,878 680,880 N 705,878 P 714,879 733,884 758,886 777,892 794,895 803,898 N 820,895 829,892 844,888 855,882 873,879 892,872 901,866 P 918,866 N 935,863 P 944,867 953,874 970,880 N 988,877 1024,870 P 1038,871 1050,876 1059,882 1068,897 1077,908 1085,908 N 1094,903 1103,900 P 1112,901 1121,904 N 1130,903 1146,898 1165,893 P 1174,892 N 1192,890 1209,885 P 1227,888 N 1236,887 1244,882 1262,879 P 1274,879
1285,884 1308,887 1324,892 1336,898 1346,902 1359,904 N 1373,901 1385,897 1403,891 P 1422,892 N 1438,892 P 1448,892 N 1465,889 P 1475,890 N 1483,889 1491,884 1509,880 P 1536,882 1552,893 1563,894 N 1572,892 1581,888 P 1597,887 N 1614,885 1632,882 1642,883 1660,879 P 1668,879`);
const sig = parse(`176,908 O 204,912 230,922 238,922 G 248,922 264,915 281,906 300,902 317,896 334,885 343,882 370,876 O 379,877 414,880 G 428,874 446,869 O 467,871 484,874 G 493,873 O 502,874 520,883 537,892 546,894 G 567,894 591,890 608,889 O 626,891 G 643,889 648,889 671,885 688,883 O 697,883 G 733,883 O 766,886 787,889 803,893 830,894 G 840,893 864,888 892,881 917,874 935,868 O 952,869 970,872 989,874 G 1013,868 1032,864 1042,864 O 1052,865 1059,867 1068,873 1085,887 1103,896 G 1119,896 O 1146,898 G 1165,896 1174,896 O 1183,896 G 1192,896 O 1200,896 G 1228,894 1253,893 1280,887 O 1297,889 1324,891 1342,894 1361,900 1377,901 G 1386,902 1401,897 1412,895 O 1448,897 G 1483,897 1499,893 1516,888 1536,885 O 1552,888 1573,893 G 1589,893 1614,886 1642,886 1668,883`);

function awesome() {
  const zero = 884;
  let s = grid(851, 926, [918.5]);
  for (let i = 17; i < 186; i++) {
    const x = Math.round(bx(i)), y = at(sig, x), up = y <= at(sig, x - 9);
    s += rect(x - 2.5, Math.min(y, zero), 6, Math.abs(y - zero), up ? "#dcffdc" : "#ffd8d8", `stroke="${up ? "#a8dca8" : "#dfb0b0"}" stroke-width="1"`);
  }
  for (let i = 23; i < 186; i++) {
    const x = Math.round(bx(i)), y = at(ao, x), up = y <= at(ao, x - 9);
    const c = y < zero ? (up ? "#0000ff" : "#ff00ff") : (up ? "#009a9a" : "#ff1a1a");
    if (Math.abs(y - zero) > 2) s += rect(x - 4, Math.min(y, zero), 9, Math.abs(y - zero), "#fff") + rect(x - 2.5, Math.min(y, zero), 6, Math.abs(y - zero), c, 'stroke="#222"');
  }
  s += line(28, 884.5, LAST, 884.5, "#0000ee", 2);
  s += segments(ao, { N: "#00002e", P: "#aa00aa" }, 4);
  s += segments(sig, { O: "#ff9500", G: "#66ff66" }, 4);
  s += rect(1667, 878, 5, 6, "#f0f");
  s += tri("379,877 441,871 733,884 954,873 1298,889 1325,892 1554,890", false, "#fff000", 5);
  s += tri("238,916 423,877 565,894 839,892 1148,898 1307,889 1378,899 1572,891", true, "#00f0ff", 5);
  s += frame(851, 926) + tick(879.5, "#f0f") + tick(883.5, "#66ff66") + tick(884.5, "#f0f") + tick(918.5, "#748e9b");
  s += tag(866, "0,0877", "#aa00aa", 31) + tag(872, "", "#111", 31) + tag(876, "0,0170", "#60ee60", 31, 12) + tag(877, "0", "#f0f", 8, 7) + tag(883, "0", "#f0f", 8, 13);
  s += text(1884, 921, "-0,5");
  draw("awesome", 851, 75, s);
}

/* ---------- barra ---------- */
function barra() {
  let s = grid(926, 995, [931.5, 993.5]);
  s += rect(28, 926, 1645, 69, "#fffd84");
  s += stripes("0-4 6-9 22-24 30 33-35 37-40 44-54 69-70 72-73 83-86 94-101 103-104 107 109 113-114 116-120 134 136 143 147-149 155 161-164 171-174 182-183", "#40ff40", 926, 69);
  s += line(28, 962.5, LAST, 962.5, "#000", 1);
  s += frame(926, 995) + tick(931.5, "#748e9b") + tick(962.5) + tick(993.5, "#748e9b");
  s += text(1884, 934, "0,505") + tag(955, "0,5000", "#111", 31) + text(1884, 994, "0,495");
  draw("barra", 926, 69, s);
}

function years() {
  let s = line(28, 995.5, 1878, 995.5, "#748e9b");
  for (let k = 0; k < 26; k++) {
    const x = Math.round(bx(2 + k * 8)) - .5;
    s += line(x, 996, x, 999, "#748e9b") + text(x, 1008, 1980 + k * 2, "#111", 'text-anchor="middle"');
  }
  draw("years", 995, 15, s);
}

/* ---------- drawing tools ---------- */
const plus = (x, y) => `<path d="M${x - 2} ${y}h5M${x} ${y - 2}v5" stroke="#1818e0"/>`;
const oval = (c, f) => `<ellipse cx="12" cy="11" rx="7" ry="5" fill="${f}" stroke="${c}"/>${plus(5, 16)}${plus(19, 6)}`;
const diag = c => `<path d="M3 20L21 2" stroke="${c}" stroke-width="1.5"/>`;
const flat = (c, w = 2) => `<path d="M3 11h18" stroke="${c}" stroke-width="${w}"/>`;
const bell = '<path d="M5 16q3-3 3-7 1-4 4-4t4 4q0 4 3 7z" fill="#ffe11a" stroke="#a07a00"/><circle cx="12" cy="17" r="2" fill="#d9a800"/>';
const lens = '<path d="M13 12l6 6" stroke="#444" stroke-width="2"/><circle cx="10" cy="9" r="5" fill="#c5d6de" stroke="#444"/>';
const tools = [
  ["Cursor", '<path d="M9 4v12l3-3 2 5 2-1-2-5h4z" fill="#fff" stroke="#667"/>'],
  ["Lupa", lens],
  ["Zoom de zona", '<path d="M3 8v9h10" fill="none" stroke="#2468e8" stroke-width="1.500" stroke-dasharray="2 1"/><g transform="translate(3 0)">' + lens + '</g>'],
  ["Alerta", bell + '<path d="M5 5h14" stroke="#333" stroke-dasharray="2 1"/><path d="M15 7v9l2-2 2 3 1-1-1-3h3z" fill="#fff" stroke="#33d"/>'],
  ["Aviso", bell + '<path d="M5 5q-3 3 0 6M19 5q3 3 0 6" fill="none" stroke="#777"/>'],
  ["Fibonacci", '<path d="M4 13l4-8 4 8h5" fill="none" stroke="#222"/><path d="M9 7h12" stroke="#e74" stroke-dasharray="2 1"/><path d="M18 18v-7h4M18 14h3" fill="none" stroke="#11d" stroke-width="2"/>' + plus(5, 6) + plus(4, 14)],
  ["Fibonacci plano", '<path d="M5 7h13" stroke="#e74" stroke-dasharray="2 1"/><path d="M7 10h9" stroke="#44d"/><path d="M18 17v-7h4M18 13h3" fill="none" stroke="#11d" stroke-width="2"/>'],
  ["Zona", '<path d="M5 6h13v10H5z" fill="#a9c6ef" stroke="#5c92f0"/>' + plus(5, 16) + plus(19, 6)],
  ["Rectángulo", '<path d="M5 6h13v10H5z" fill="#d9a0a8" stroke="#e01818"/>' + plus(5, 16) + plus(19, 6)],
  ["Flecha", '<path d="M7 15l8-7" stroke="#111" stroke-width="2"/><circle cx="6" cy="16" r="2" fill="none" stroke="#111"/><path d="M12 5h8v8z" fill="#111"/>'],
  ["Texto", '<path d="M5 4h14v10l-4 4H5z" fill="#b6cfe6" stroke="#6495ff"/><path d="M8 7h8M12 7v8" stroke="#111" stroke-width="2"/>'],
  ["Nota", '<path d="M12 3a7 7 0 0 1 2 14l-2 4-1-4a7 7 0 0 1 1-14z" fill="#b6cfe6" stroke="#6495ff"/><path d="M8 7h8M12 7v8" fill="none" stroke="#0a7a2a" stroke-width="2"/>'],
  ["Segmento", '<path d="M8 15l8-8" stroke="#111"/><circle cx="6" cy="16" r="2" fill="none" stroke="#111"/><circle cx="17" cy="6" r="2" fill="none" stroke="#111"/>'],
  ["Nivel verde", '<circle cx="10" cy="11" r="2" fill="none" stroke="#3ab54a"/><path d="M12 11h9" stroke="#3ab54a" stroke-width="2"/>'],
  ["Nivel rojo", '<circle cx="10" cy="11" r="2" fill="none" stroke="#e22"/><path d="M12 11h9" stroke="#f11" stroke-width="2"/>'],
  ["Regla", '<path d="M4 15L16 4l4 4L8 19z" fill="#a8b6bd" stroke="#4d5a62"/><path d="M8 12l2 2M11 9l2 2M14 6l2 2" stroke="#4d5a62"/>'],
  ["Pronóstico", '<path d="M3 5h18v13H3z" fill="#8fbfae"/><path d="M3 18h18M3 5h18" stroke="#e76" stroke-dasharray="2 1"/><path d="M4 16l4-5 4 4 7-8" fill="none" stroke="#a9c0ee" stroke-width="2"/>'],
  ["Elipse roja", oval("#e01818", "#bf9aa6")], ["Elipse marrón", oval("#7a5230", "#a39a90")],
  ["Elipse verde", oval("#127a2a", "#4f9f80")], ["Elipse clara", oval("#2ae83a", "#9fe0b4")],
  ["Línea", diag("#111")], ["Línea verde", diag("#2fae3f")], ["Línea roja", diag("#f01818")],
  ["Horizontal", '<path d="M3 11.500h18" stroke="#111"/>'], ["Salmón", flat("#f58a7a")], ["Lima", flat("#10f010")], ["Verde", flat("#0a8a1a")],
  ["Roja", flat("#f01010")], ["Azul claro", flat("#6a9cf8")], ["Azul", flat("#0c0cae")],
  ["Vertical", '<path d="M12.500 2v18" stroke="#111"/>'],
  ["Ángulo", '<path d="M17 3L4 17h16" fill="none" stroke="#e05050"/><path d="M11 9q4 3 3 8" fill="none" stroke="#11d"/><circle cx="18" cy="8" r="2" fill="none" stroke="#11d"/>'],
  ["Ciclo", '<circle cx="11" cy="12" r="6" fill="none" stroke="#f08030"/>' + plus(11, 12) + plus(17, 7)],
  ["Ondas", '<path d="M3 8l5 8 4-10 4 10 4-11" fill="none" stroke="#5c8cf0"/>' + plus(4, 8) + plus(8, 17) + plus(12, 6) + plus(16, 17) + plus(20, 5)],
  ["Ondas abc", '<path d="M5 17l5-11 7 11 3-12" fill="none" stroke="#5c8cf0"/>' + plus(5, 17) + plus(10, 6) + plus(17, 17)],
  ["Correcto", '<path d="M3 12l4-3 3 4 8-9 3 2L10 19z" fill="#48c24e" stroke="#218a2a"/>'],
  ["Me gusta", '<path d="M3 10h5v9H3zM9 10l4-7q3 0 2 6h6l-1 10H9z" fill="#3cbf46" stroke="#218a2a"/>'],
  ["Incorrecto", '<path d="M5 6l3-3 4 4 4-4 3 3-4 5 4 5-3 3-4-4-4 4-3-3 4-5z" fill="#f01818" stroke="#a80000"/>'],
  ["Precaución", '<path d="M12 3l9 16H3z" fill="#ffae1a" stroke="#b87400"/><path d="M12 8v6M12 15v2" stroke="#333" stroke-width="2"/>'],
  ["Subida", '<path d="M12 4l7 7h-4v7H9v-7H5z" fill="#1f9a2d" stroke="#0c6a18"/>'],
  ["Bajada", '<path d="M9 4h6v8H9z" fill="#e01818"/>']
];
document.getElementById("tools").innerHTML = tools.map(([name, art], i) =>
  `<button class="tool${i ? "" : " on"}" title="${name}" aria-label="${name}"><svg width="24" height="22" viewBox="0 0 24 22">${art}</svg></button>`).join("");

price();
trenes();
willy();
awesome();
barra();
years();
```
